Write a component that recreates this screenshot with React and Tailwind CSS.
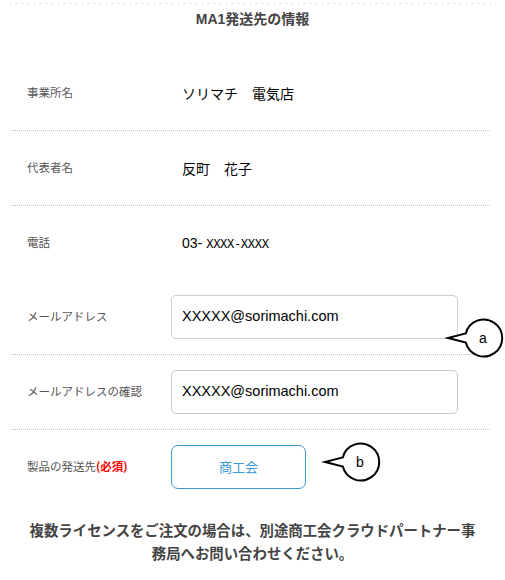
import React from 'react'

const jp = { fontFamily: '"Noto Sans CJK JP", "Liberation Sans", sans-serif' }
const latin = { fontFamily: '"Liberation Sans", "Noto Sans CJK JP", sans-serif' }

// Speech-bubble marker with a tail pointing left
function Callout({ letter, className }) {
  return (
    <svg width="62" height="46" viewBox="0 0 62 46" className={className}>
      <path
        d="M 22.8 18.4 L 5 23 L 22.8 27.6 A 18.5 18.5 0 1 0 22.8 18.4 Z"
        fill="white"
        stroke="black"
        strokeWidth="2"
        strokeLinejoin="miter"
      />
      <text
        x="40"
        y="27.5"
        textAnchor="middle"
        fontSize="14"
        fontFamily="Liberation Sans, sans-serif"
        fill="black"
      >
        {letter}
      </text>
    </svg>
  )
}

function Row({ label, children, border = true }) {
  return (
    <div
      className={`flex items-center pl-[15px] ${border ? 'h-[75px] border-b border-dotted border-[#c4c4c4]' : 'h-[74px]'}`}
    >
      <div className="w-[144px] shrink-0 text-[11.5px] text-[#555]" style={jp}>
        {label}
      </div>
      {children}
    </div>
  )
}

function TextValue({ children }) {
  return (
    <div className="pl-[11px] text-[14px] text-black" style={jp}>
      {children}
    </div>
  )
}

function EmailBox({ value, borderClass }) {
  return (
    <div
      className={`w-[287px] h-[44px] flex items-center pl-[10px] rounded-[5px] border ${borderClass} text-[14.5px] text-black`}
      style={latin}
    >
      {value}
    </div>
  )
}

export default function App() {
  return (
    <div className="relative w-[505px] h-[580px] bg-white overflow-hidden">
      {/* sparse dotted top rule */}
      <div className="mt-[3px] mx-[10px] h-px bg-[repeating-linear-gradient(90deg,#c8c8c8_0_1px,transparent_1px_6px)]" />

      <div className="h-[52px] pt-[4px]">
        <h2 className="text-center text-[14px] leading-[20px] font-bold text-[#444]" style={jp}>
          <span style={latin}>MA1</span>発送先の情報
        </h2>
      </div>

      <div className="w-[478px] ml-[12px]">
        <Row label="事業所名">
          <TextValue>ソリマチ　電気店</TextValue>
        </Row>
        <Row label="代表者名">
          <TextValue>反町　花子</TextValue>
        </Row>
        <Row label="電話" border={false}>
          <div className="pl-[11px] flex items-baseline text-black">
            <span className="text-[14px]" style={latin}>03-</span>
            <span
              className="ml-[4px] text-[12px] tracking-[-0.3px]"
              style={{ fontFamily: '"DejaVu Sans Mono", monospace' }}
            >
              XXXX-XXXX
            </span>
          </div>
        </Row>
        <Row label="メールアドレス">
          <EmailBox value="XXXXX@sorimachi.com" borderClass="border-[#d8c9cc]" />
        </Row>
        <Row label="メールアドレスの確認">
          <EmailBox value="XXXXX@sorimachi.com" borderClass="border-[#c9c9c9]" />
        </Row>
        <div className="flex items-center h-[74px] pl-[15px]">
          <div className="w-[144px] shrink-0 text-[11.5px] text-[#555]" style={jp}>
            製品の発送先<span className="font-bold text-[#ff0000]">(必須)</span>
          </div>
          <button
            className="w-[135px] h-[44px] rounded-[7px] border border-[#3d9ad1] text-[13px] text-[#3a9ad6] bg-white"
            style={jp}
          >
            商工会
          </button>
        </div>
      </div>

      <p
        className="mt-[14px] px-[26px] text-center text-[14.4px] leading-[23px] font-bold text-[#444]"
        style={jp}
      >
        複数ライセンスをご注文の場合は、別途商工会クラウドパートナー事務局へお問い合わせください。
      </p>

      <Callout letter="a" className="absolute left-[443px] top-[315px]" />
      <Callout letter="b" className="absolute left-[320px] top-[439px]" />
    </div>
  )
}
